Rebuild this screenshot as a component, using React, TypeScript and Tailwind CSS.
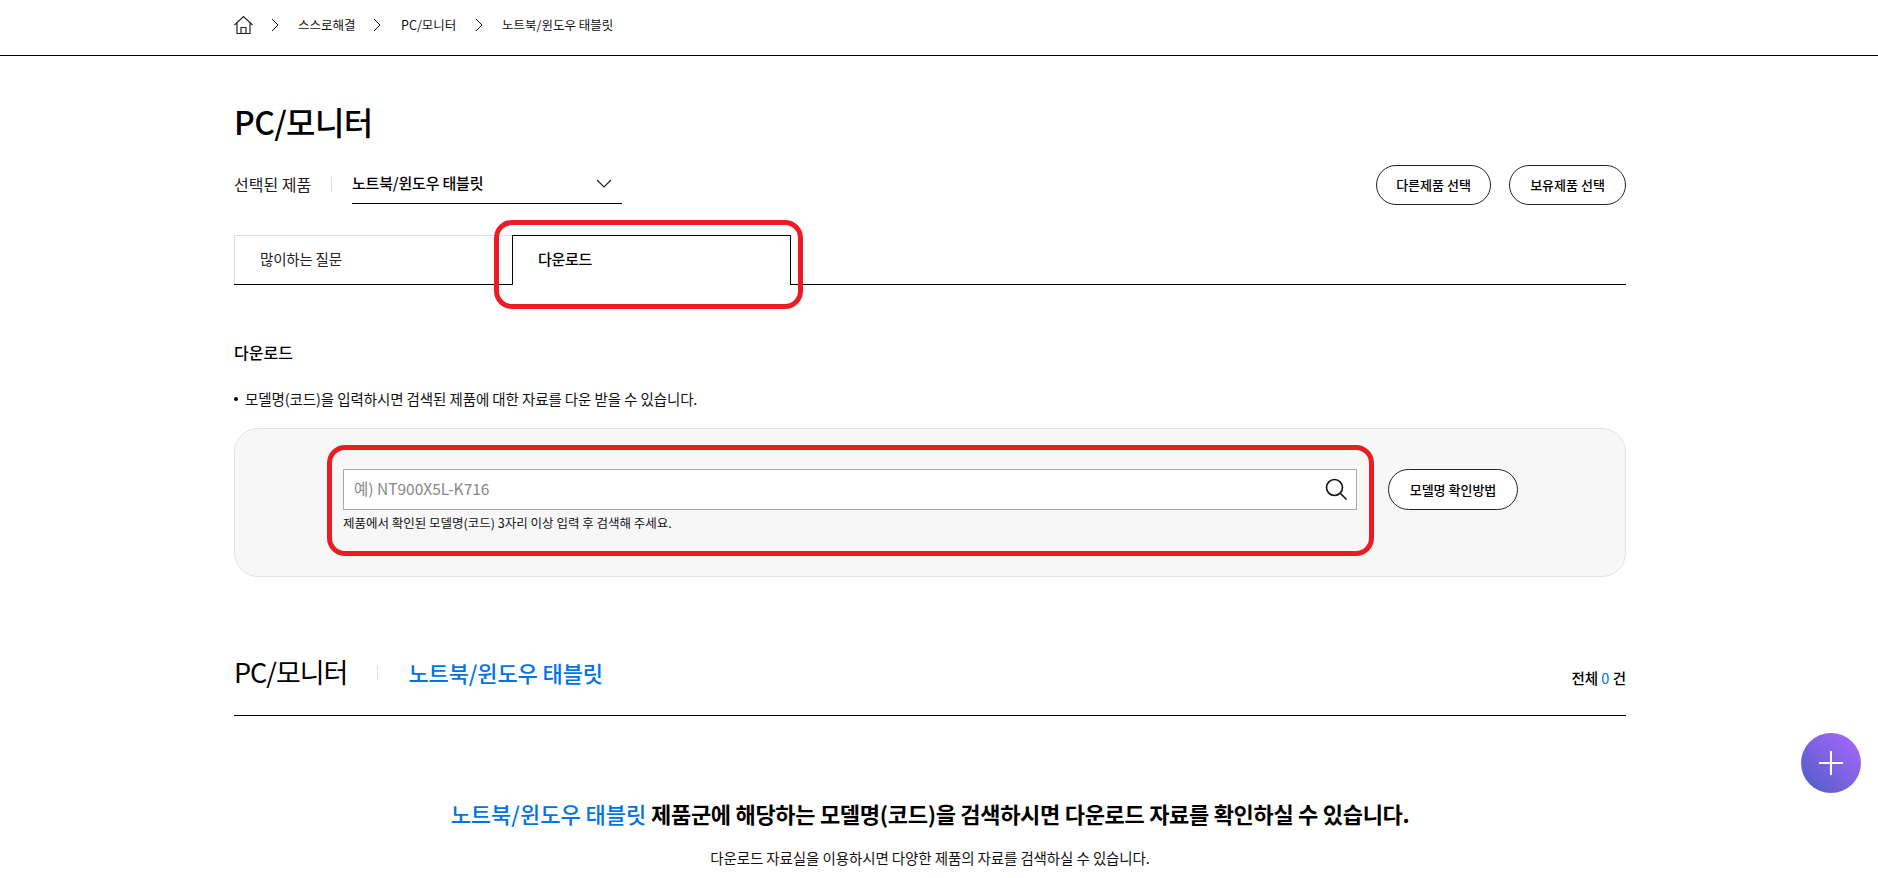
const ff = "font-['Noto_Sans_CJK_KR','Noto_Sans',sans-serif]";

function Chevron() {
  return (
    <svg width="8" height="14" viewBox="0 0 8 14" fill="none" stroke="#111" strokeWidth="1">
      <path d="M1 1l6 6-6 6" />
    </svg>
  );
}

function PillButton({ label, width }: { label: string; width: string }) {
  return (
    <button className={`${width} h-10 rounded-full border border-[#222] bg-white text-[13px] font-medium text-black`}>
      {label}
    </button>
  );
}

export default function App() {
  return (
    <div className={`${ff} relative h-[878px] w-full overflow-hidden bg-white text-black`}>
      {/* breadcrumb */}
      <div className="h-[56px] border-b border-black pl-[234px] pb-[5px] flex items-center">
        <svg width="19" height="20" viewBox="0 0 19 20" fill="none" stroke="#222" strokeWidth="1.2">
          <path d="M0.5 10L9.5 1.5 18.5 10M3 8V18.5H16V8M7 18.5V12.5H12V18.5" />
        </svg>
        <div className="ml-[18px] flex items-center text-[12.5px] text-[#111]">
          <Chevron />
          <span className="ml-[19px] w-[58px] whitespace-nowrap">스스로해결</span>
          <span className="ml-[17px]"><Chevron /></span>
          <span className="ml-[20px] w-[55px] whitespace-nowrap">PC/모니터</span>
          <span className="ml-[19px]"><Chevron /></span>
          <span className="ml-[19px] whitespace-nowrap">노트북/윈도우 태블릿</span>
        </div>
      </div>

      <div className="w-[1861px] pl-[234px] pr-[235px]">
        <h1 className="mt-[41px] text-[32px] font-medium leading-[48px] tracking-[-0.6px]">PC/모니터</h1>

        {/* selected product */}
        <div className="mt-[19px] flex items-start justify-between">
          <div className="flex items-center h-[40px]">
            <span className="w-[78px] whitespace-nowrap text-base text-[#222]">선택된 제품</span>
            <span className="ml-[19px] h-[15px] w-px bg-[#ddd]" />
            <div className="ml-[20px] flex h-[40px] w-[270px] items-center justify-between border-b border-black pr-[10px]">
              <span className="text-[15px] font-medium tracking-[-0.2px]">노트북/윈도우 태블릿</span>
              <svg width="16" height="10" viewBox="0 0 16 10" fill="none" stroke="#222" strokeWidth="1.2">
                <path d="M1 1l7 7 7-7" />
              </svg>
            </div>
          </div>
          <div className="mt-px flex gap-[18px]">
            <PillButton label="다른제품 선택" width="w-[115px]" />
            <PillButton label="보유제품 선택" width="w-[117px]" />
          </div>
        </div>

        {/* tabs */}
        <div className="mt-[30px] flex h-[50px] border-b border-black">
          <div className="h-[49px] w-[278px] border-l border-t border-[#ddd] pl-[25px] pt-[12px] text-[14.5px] tracking-[-0.2px] text-[#222]">
            많이하는 질문
          </div>
          <div className="relative h-[50px] w-[279px] border-l border-r border-t border-black bg-white pl-[25px] pt-[12px] text-[15px] font-medium tracking-[-0.3px]">
            다운로드
            <div className="absolute -left-[19px] -right-[13px] -top-[16px] h-[89px] rounded-[18px] border-[5px] border-[#ed1c24]" />
          </div>
        </div>

        <h2 className="mt-[56px] text-base font-medium leading-[22px]">다운로드</h2>
        <p className="mt-[25px] flex items-center text-[14.5px] leading-[22px] tracking-[-0.1px] text-[#111]">
          <span className="mr-[7px] h-1 w-1 rounded-full bg-black" />
          모델명(코드)을 입력하시면 검색된 제품에 대한 자료를 다운 받을 수 있습니다.
        </p>

        {/* search panel */}
        <div className="mt-[18px] flex h-[149px] items-start rounded-[24px] border border-[#e3e3e3] bg-[#f7f7f7] pl-[108px] pt-[40px]">
          <div className="relative w-[1014px]">
            <div className="flex h-[41px] items-center justify-between border border-[#aaa] bg-white pb-px pl-[10px] pr-[8px]">
              <span className="text-[15.5px] text-[#888]">예) NT900X5L-K716</span>
              <svg width="24" height="24" viewBox="0 0 24 24" fill="none" stroke="#111" strokeWidth="1.6">
                <circle cx="10.5" cy="10.5" r="8" />
                <path d="M16.5 16.5L22.5 22.5" />
              </svg>
            </div>
            <p className="mt-[4px] text-[12.5px] leading-[18px] text-[#111]">
              제품에서 확인된 모델명(코드) 3자리 이상 입력 후 검색해 주세요.
            </p>
            <div className="absolute -left-[16px] -right-[17px] -top-[24px] h-[111px] rounded-[18px] border-[5px] border-[#ed1c24]" />
          </div>
          <div className="ml-[31px]">
            <button className="h-[41px] w-[130px] rounded-full border border-[#222] bg-white text-[13px] font-medium">
              모델명 확인방법
            </button>
          </div>
        </div>

        {/* list heading */}
        <div className="mt-[74px] flex h-[65px] items-start justify-between border-b border-black">
          <div className="mt-px flex items-center">
            <span className="text-[27px] leading-[40px] tracking-[-1px]">PC/모니터</span>
            <span className="ml-[30px] h-[15px] w-px bg-[#ddd]" />
            <span className="ml-[30px] text-[22px] font-medium leading-[40px] tracking-[-0.1px] text-[#0073e6]">노트북/윈도우 태블릿</span>
          </div>
          <div className="mt-[15px] text-[14.5px] font-medium leading-[24px]">
            전체 <span className="font-normal text-[#0073e6]">0</span> 건
          </div>
        </div>

        {/* empty state */}
        <div className="text-center">
          <p className="mt-[80px] text-[22px] font-bold leading-[34px] tracking-[-0.3px]">
            <span className="font-medium tracking-[0px] text-[#0073e6]">노트북/윈도우 태블릿</span> 제품군에 해당하는 모델명(코드)을 검색하시면 다운로드 자료를 확인하실 수 있습니다.
          </p>
          <p className="mt-[17px] text-[14.5px] leading-[22px] tracking-[-0.1px] text-[#111]">
            다운로드 자료실을 이용하시면 다양한 제품의 자료를 검색하실 수 있습니다.
          </p>
        </div>
      </div>

      {/* floating action */}
      <button className="absolute left-[1801px] top-[733px] flex h-[60px] w-[60px] items-center justify-center rounded-full bg-gradient-to-bl from-[#ad66ff] to-[#4a5cc4]">
        <svg width="24" height="24" viewBox="0 0 24 24" stroke="#fff" strokeWidth="2">
          <path d="M0 12H24M12 0V24" />
        </svg>
      </button>
    </div>
  );
}
